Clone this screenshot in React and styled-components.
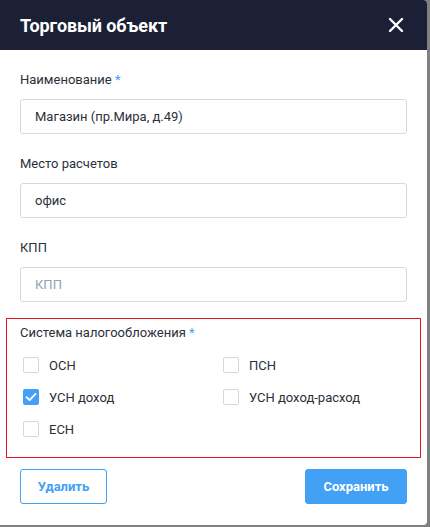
import React from "react";
import styled, { createGlobalStyle } from "styled-components";

const GlobalStyle = createGlobalStyle`
  html, body {
    margin: 0;
    padding: 0;
    background: #808080;
  }
  body {
    font-family: Roboto, "Noto Sans", Arial, sans-serif;
  }
`;

const Modal = styled.div`
  width: 427px;
  height: 525px;
  background: #fff;
  border-radius: 0 4px 4px 0;
  overflow: hidden;
  display: flex;
  flex-direction: column;
`;

const Header = styled.div`
  height: 50px;
  background: #1c2036;
  display: flex;
  align-items: center;
  justify-content: space-between;
  padding: 0 20px;
  flex-shrink: 0;
`;

const Title = styled.h1`
  margin: 0;
  color: #fff;
  font-size: 18px;
  font-weight: 700;
  letter-spacing: -0.1px;
`;

const CloseButton = styled.button`
  border: 0;
  background: transparent;
  padding: 0;
  margin-right: 3px;
  width: 16px;
  height: 16px;
  display: flex;
  cursor: pointer;
`;

const Body = styled.div`
  padding: 22px 20px 21px;
  display: flex;
  flex-direction: column;
  flex: 1;
`;

const Field = styled.div`
  display: flex;
  flex-direction: column;
  gap: 11px;
  margin-bottom: ${p => p.$gap || 22}px;
`;

const Label = styled.label`
  font-size: 13px;
  line-height: 16px;
  color: #2b2f3a;
`;

const Star = styled.span`
  color: #42a0f5;
`;

const Input = styled.input`
  box-sizing: border-box;
  height: 35px;
  width: 100%;
  border: 1px solid #d3d8e4;
  border-radius: 3px;
  padding: 0 14px;
  font-family: inherit;
  font-size: 13px;
  color: #2b2f3a;
  outline: none;
  &::placeholder {
    color: #8fa0ba;
  }
`;

const TaxBox = styled.div`
  margin: 0 -14px;
  border: 1px solid #e3131e;
  padding: 6px 13px 20px;
  display: flex;
  flex-direction: column;
  gap: 16px;
`;

const Options = styled.div`
  display: grid;
  grid-template-columns: 200px 1fr;
  row-gap: 16px;
  padding-left: 3px;
`;

const Option = styled.label`
  display: flex;
  align-items: center;
  gap: 10px;
  font-size: 13px;
  color: #2b2f3a;
  cursor: pointer;
  height: 16px;
`;

const Box = styled.span`
  box-sizing: border-box;
  width: 16px;
  height: 16px;
  border-radius: 2px;
  border: ${p => (p.$checked ? "none" : "1.5px solid #d3d8e4")};
  background: ${p => (p.$checked ? "#42a0f5" : "#fff")};
  display: flex;
  align-items: center;
  justify-content: center;
`;

const Footer = styled.div`
  display: flex;
  justify-content: space-between;
  margin-top: 11px;
`;

const Button = styled.button`
  box-sizing: border-box;
  height: 35px;
  width: ${p => (p.$primary ? 102 : 87)}px;
  padding: 0;
  border-radius: 3px;
  border: 1px solid #42a0f5;
  background: ${p => (p.$primary ? "#42a0f5" : "#fff")};
  color: ${p => (p.$primary ? "#fff" : "#42a0f5")};
  font-family: inherit;
  font-size: 13px;
  font-weight: 700;
  cursor: pointer;
`;

const options = [
  { name: "ОСН", checked: false },
  { name: "ПСН", checked: false },
  { name: "УСН доход", checked: true },
  { name: "УСН доход-расход", checked: false },
  { name: "ЕСН", checked: false },
];

const Check = () => (
  <svg width="12" height="10" viewBox="0 0 12 10">
    <path d="M1.5 5.2 L4.6 8.2 L10.5 1.8" fill="none" stroke="#fff" strokeWidth="1.8" strokeLinecap="round" strokeLinejoin="round" />
  </svg>
);

export default function App() {
  return (
    <>
      <GlobalStyle />
      <Modal>
        <Header>
          <Title>Торговый объект</Title>
          <CloseButton aria-label="Закрыть">
            <svg width="16" height="16" viewBox="0 0 16 16">
              <path d="M2 2 L14 14 M14 2 L2 14" stroke="#fff" strokeWidth="2.4" strokeLinecap="round" />
            </svg>
          </CloseButton>
        </Header>
        <Body>
          <Field>
            <Label>Наименование <Star>*</Star></Label>
            <Input defaultValue="Магазин (пр.Мира, д.49)" />
          </Field>
          <Field>
            <Label>Место расчетов</Label>
            <Input defaultValue="офис" />
          </Field>
          <Field $gap={16}>
            <Label>КПП</Label>
            <Input placeholder="КПП" />
          </Field>
          <TaxBox>
            <Label>Система налогообложения <Star>*</Star></Label>
            <Options>
              {options.map(o => (
                <Option key={o.name}>
                  <Box $checked={o.checked}>{o.checked && <Check />}</Box>
                  {o.name}
                </Option>
              ))}
            </Options>
          </TaxBox>
          <Footer>
            <Button>Удалить</Button>
            <Button $primary>Сохранить</Button>
          </Footer>
        </Body>
      </Modal>
    </>
  );
}
